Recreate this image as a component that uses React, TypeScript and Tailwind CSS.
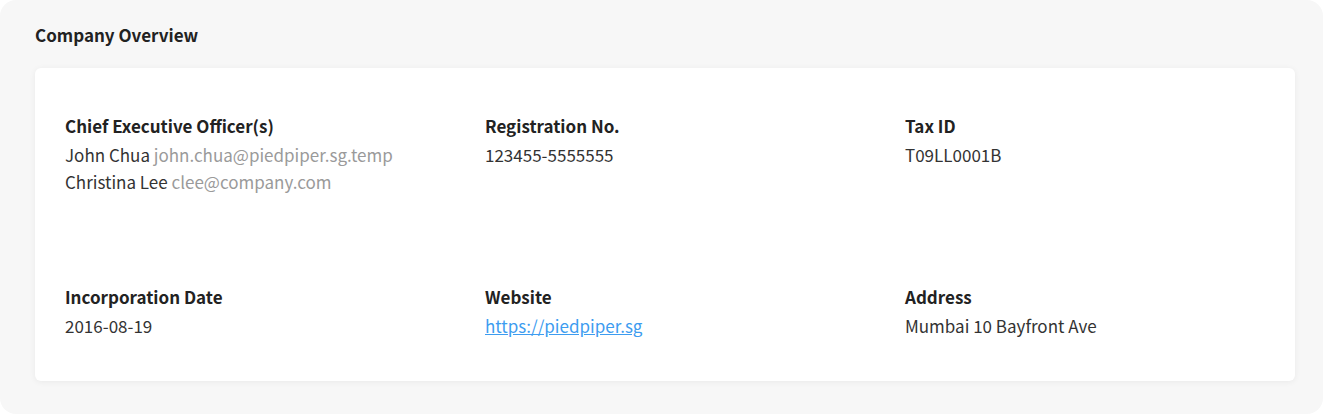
import React from "react";

const font = { fontFamily: '"Noto Sans CJK KR", "Noto Sans", sans-serif' };

function Field({ label, children }: { label: string; children: React.ReactNode }) {
  return (
    <div className="px-[30px]">
      <div className="text-[17px] leading-[24px] font-bold text-[#222]">{label}</div>
      <div className="mt-[3px] text-[17px] leading-[27px] font-normal text-[#333]">{children}</div>
    </div>
  );
}

export default function App() {
  return (
    <div className="w-[1323px] h-[414px] bg-white" style={font}>
      <div className="h-full rounded-[16px] bg-[#f7f7f7] pl-[35px] pr-[28px] pt-[23px]">
        <div className="text-[17px] leading-[24px] font-bold text-[#222]">Company Overview</div>
        <div className="mt-[21px] h-[313px] rounded-[6px] bg-white shadow-[0_1px_6px_rgba(0,0,0,0.06)] pt-[46px]">
          <div className="grid grid-cols-3 gap-y-[90px]">
            <Field label="Chief Executive Officer(s)">
              <div>
                John Chua <span className="text-[#9a9a9a]">john.chua@piedpiper.sg.temp</span>
              </div>
              <div>
                Christina Lee <span className="text-[#9a9a9a]">clee@company.com</span>
              </div>
            </Field>
            <Field label="Registration No.">123455-5555555</Field>
            <Field label="Tax ID">T09LL0001B</Field>
            <Field label="Incorporation Date">2016-08-19</Field>
            <Field label="Website">
              <a href="#" className="text-[#3d9cf0] underline">https://piedpiper.sg</a>
            </Field>
            <Field label="Address">Mumbai 10 Bayfront Ave</Field>
          </div>
        </div>
      </div>
    </div>
  );
}
